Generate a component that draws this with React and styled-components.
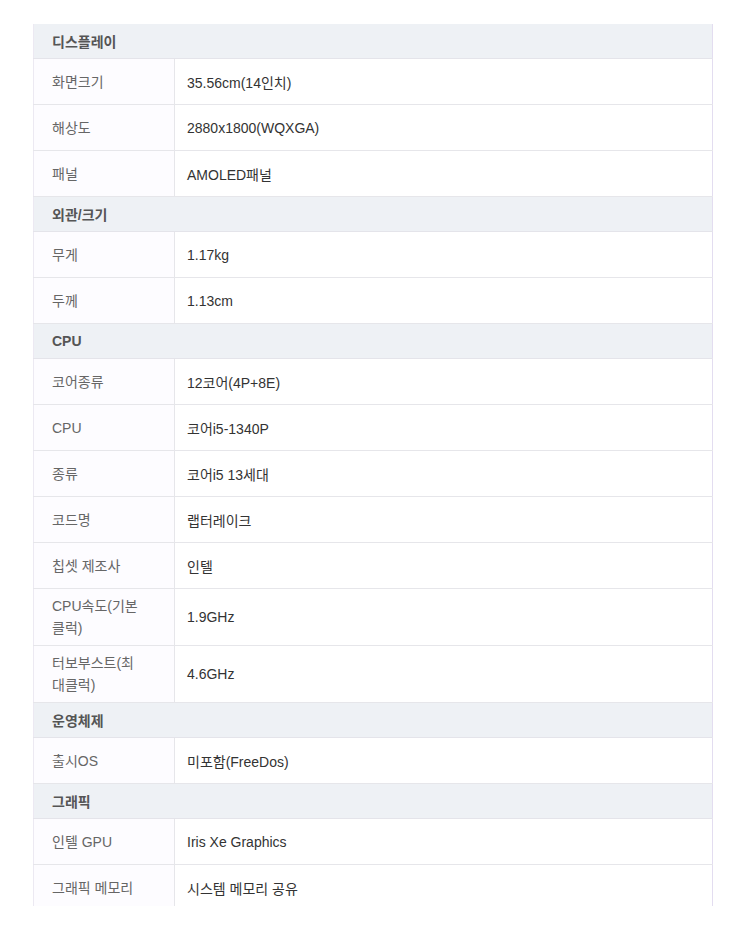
import React from 'react';
import styled, {createGlobalStyle} from 'styled-components';

const GlobalStyle = createGlobalStyle`
  body {
    margin: 0;
    background: #ffffff;
    font-family: "Liberation Sans", "Noto Sans CJK KR", sans-serif;
  }
`;

const Page = styled.div`
  width: 750px;
  height: 948px;
  padding: 24px 0 0 33px;
  box-sizing: border-box;
`;

const Clip = styled.div`
  width: 680px;
  height: 882px;
  overflow: hidden;
`;

const Table = styled.table`
  width: 680px;
  border-collapse: collapse;
  table-layout: fixed;
  font-size: 14px;
  border-left: 1px solid #ece9f2;
  border-right: 1px solid #e3ddf0;
`;

const LabelCol = styled.col`
  width: 141px;
`;

const HeadCell = styled.th`
  height: 34px;
  padding: 0 18px;
  text-align: left;
  font-weight: bold;
  color: #555;
  background: #eef1f5;
  border-bottom: 1px solid #e4e4ea;
`;

const Label = styled.td`
  height: ${(p) => (p.$tall ? 56 : 45)}px;
  padding: 0 32px 0 18px;
  color: #666;
  line-height: 22px;
  background: #fdfcff;
  border-right: 1px solid #e6e6ea;
  border-bottom: 1px solid #e6e6ea;
`;

const Value = styled.td`
  padding: 0 12px;
  color: #333;
  border-bottom: 1px solid #e6e6ea;
`;

const specs = [
    ['디스플레이', [
        ['화면크기', '35.56cm(14인치)'],
        ['해상도', '2880x1800(WQXGA)'],
        ['패널', 'AMOLED패널'],
    ]],
    ['외관/크기', [
        ['무게', '1.17kg'],
        ['두께', '1.13cm'],
    ]],
    ['CPU', [
        ['코어종류', '12코어(4P+8E)'],
        ['CPU', '코어i5-1340P'],
        ['종류', '코어i5 13세대'],
        ['코드명', '랩터레이크'],
        ['칩셋 제조사', '인텔'],
        ['CPU속도(기본 클럭)', '1.9GHz', true],
        ['터보부스트(최대클럭)', '4.6GHz', true],
    ]],
    ['운영체제', [
        ['출시OS', '미포함(FreeDos)'],
    ]],
    ['그래픽', [
        ['인텔 GPU', 'Iris Xe Graphics'],
        ['그래픽 메모리', '시스템 메모리 공유'],
    ]],
];

export default function App() {
    return (
        <Page>
            <GlobalStyle/>
            <Clip>
                <Table>
                    <colgroup>
                        <LabelCol/>
                        <col/>
                    </colgroup>
                    <tbody>
                    {specs.map(([group, rows]) => (
                        <React.Fragment key={group}>
                            <tr>
                                <HeadCell colSpan={2}>{group}</HeadCell>
                            </tr>
                            {rows.map(([name, value, tall]) => (
                                <tr key={name}>
                                    <Label $tall={tall}>{name}</Label>
                                    <Value>{value}</Value>
                                </tr>
                            ))}
                        </React.Fragment>
                    ))}
                    </tbody>
                </Table>
            </Clip>
        </Page>
    );
}
